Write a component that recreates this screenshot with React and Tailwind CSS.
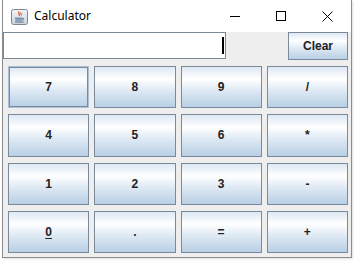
import React from "react";

const btnBg =
  "bg-[linear-gradient(to_bottom,#dde8f3_0%,#ffffff_30%,#dde8f3_60%,#b8cfe5_100%)]";

function Btn({ label, focused, underline }) {
  return (
    <div
      className={`flex items-center justify-center border ${btnBg} ${
        focused ? "border-[#a9c0d8] shadow-[inset_0_0_0_1px_#7a8a99]" : "border-[#7a8a99]"
      } text-[12px] font-bold text-[#222222] [font-family:'Liberation_Sans',Arial,sans-serif]`}
    >
      <span className={underline ? "underline underline-offset-2" : ""}>{label}</span>
    </div>
  );
}

function JavaIcon() {
  return (
    <svg width="17" height="16" viewBox="0 0 17 16">
      <defs>
        <linearGradient id="jg" x1="0" y1="0" x2="0" y2="1">
          <stop offset="0" stopColor="#f2f4f7" />
          <stop offset="1" stopColor="#c9d2dc" />
        </linearGradient>
      </defs>
      <rect x="0.5" y="0.5" width="16" height="15" rx="2" fill="url(#jg)" stroke="#7c8794" />
      <path d="M8 2.5c-1.5 1.5 1.5 2.5 0 4.5M10 3.5c-1 1 1 1.6 0 2.8" stroke="#e0522a" strokeWidth="1.2" fill="none" />
      <path d="M4 9.2h7.5M4.5 11h6.5M4 13h8.5" stroke="#4a6a90" strokeWidth="1" fill="none" />
      <path d="M11.5 9.2c1.5 0 1.5 1.8 0 1.8" stroke="#4a6a90" strokeWidth="1" fill="none" />
    </svg>
  );
}

export default function App() {
  const rows = [
    ["7", "8", "9", "/"],
    ["4", "5", "6", "*"],
    ["1", "2", "3", "-"],
    ["0", ".", "=", "+"],
  ];
  return (
    <div className="w-[355px] h-[261px] bg-white overflow-hidden">
      <div className="ml-[2px] w-[350px] h-[258px] border-x border-b border-[#8c8c8c] shadow-[1px_1px_2px_rgba(0,0,0,0.12)] flex flex-col">
        {/* title bar */}
        <div className="h-[32px] bg-white flex items-center shrink-0">
          <div className="ml-[8px] mt-[1px]">
            <JavaIcon />
          </div>
          <span className="ml-[6px] text-[12px] text-black [font-family:'Noto_Sans',sans-serif]">
            Calculator
          </span>
          <div className="ml-auto flex items-center h-full">
            <div className="w-[46px] h-full flex items-center justify-center">
              <div className="w-[10px] h-px bg-black" />
            </div>
            <div className="w-[46px] h-full flex items-center justify-center">
              <div className="w-[10px] h-[10px] border border-black" />
            </div>
            <div className="w-[46px] h-full flex items-center justify-center mr-[1px]">
              <svg width="11" height="11" viewBox="0 0 11 11">
                <path d="M0.5 0.5L10.5 10.5M10.5 0.5L0.5 10.5" stroke="#000" strokeWidth="1" />
              </svg>
            </div>
          </div>
        </div>
        {/* content */}
        <div className="flex-1 bg-[#eeeeee] flex flex-col">
          <div className="flex items-start h-[28px]">
            <div className="w-[223px] h-[27px] bg-white border border-[#7a8a99] flex items-center justify-end">
              <div className="w-[2px] h-[17px] bg-black mr-[1px]" />
            </div>
            <div className="ml-auto mr-[3px] w-[60px] h-[28px] flex">
              <div
                className={`flex-1 flex items-center justify-center border border-[#7a8a99] ${btnBg} text-[12px] font-bold text-[#222222] [font-family:'Liberation_Sans',Arial,sans-serif]`}
              >
                Clear
              </div>
            </div>
          </div>
          <div className="mt-[6px] ml-[5px] w-[340px] h-[187px] grid grid-cols-4 grid-rows-4 gap-x-[5px] gap-y-[6px]">
            {rows.flat().map((l, i) => (
              <Btn key={i} label={l} focused={i === 0} underline={l === "0"} />
            ))}
          </div>
        </div>
      </div>
    </div>
  );
}
